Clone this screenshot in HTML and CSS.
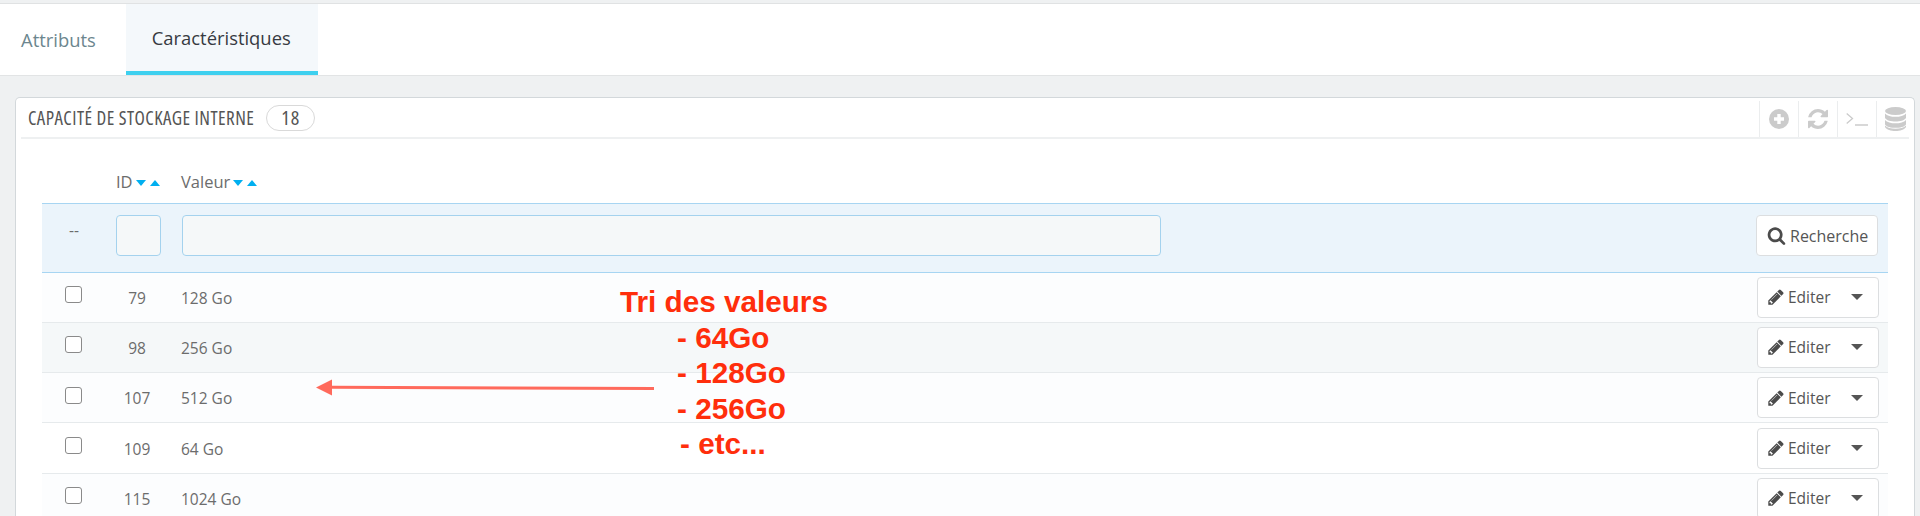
FILE: index.html
```html
<!DOCTYPE html>
<html lang="fr">
<head>
<meta charset="utf-8">
<title>Caractéristiques</title>
<link rel="stylesheet" href="styles.css">
</head>
<body>
<nav class="tabs">
  <a class="tab tab-first">Attributs</a>
  <a class="tab tab-active">Caractéristiques</a>
</nav>
<main class="content">
  <section class="panel">
    <header class="panel-head">
      <h2 class="panel-title">Capacité de stockage interne</h2>
      <span class="badge">18</span>
      <div class="tools">
        <span class="tool"><svg class="ico-tool" viewBox="0 0 20 20"><circle cx="10" cy="10" r="10" fill="#cbcbcb"/><path d="M10 5v10M5 10h10" stroke="#fff" stroke-width="3.4" fill="none"/></svg></span>
        <span class="tool"><svg class="ico-tool" viewBox="128 128 1536 1536"><path fill="#cbcbcb" d="M1639 1056q0 5-1 7-64 268-268 434.5t-478 166.5q-146 0-282.5-55t-243.5-157l-129 129q-19 19-45 19t-45-19-19-45v-448q0-26 19-45t45-19h448q26 0 45 19t19 45-19 45l-137 137q71 66 161 102t187 36q134 0 250-65t186-179q11-17 53-117 8-23 30-23h192q13 0 22.5 9.5t9.5 22.5zm25-800v448q0 26-19 45t-45 19h-448q-26 0-45-19t-19-45 19-45l138-138q-148-137-349-137-134 0-250 65t-186 179q-11 17-53 117-8 23-30 23h-199q-13 0-22.5-9.5t-9.5-22.5v-7q65-268 270-434.5t480-166.5q146 0 284 55.5t245 156.5l130-129q19-19 45-19t45 19 19 45z"/></svg></span>
        <span class="tool"><svg class="ico-term" viewBox="0 0 22 14"><path d="M.7 1.5 6.5 6.5.7 11.5M9 13h13" stroke="#cbcbcb" stroke-width="1.3" fill="none"/></svg></span>
        <span class="tool"><svg class="ico-db" viewBox="0 0 21 24"><ellipse cx="10.5" cy="4" rx="10.5" ry="4" fill="#cbcbcb"/><path fill="#cbcbcb" d="M0 6.5c2 2.6 6 3.3 10.500 3.300S19 9.100 21 6.500V11c-1.500 2.500-6 3.500-10.500 3.500S1.500 13.500 0 11zM0 13c2 2.600 6 3.300 10.500 3.300S19 15.600 21 13v4.500c-1.500 2.500-6 3.300-10.500 3.300S1.500 20 0 17.500zM0 18.500c2 2.600 6 3.200 10.500 3.200S19 21.100 21 18.500V20c-1.500 2.800-6 4-10.500 4S1.500 22.800 0 20z"/></svg></span>
      </div>
    </header>
    <table class="grid">
      <colgroup>
        <col class="col-check"><col class="col-id"><col class="col-value"><col class="col-actions">
      </colgroup>
      <thead>
        <tr class="sort-row">
          <th></th>
          <th class="th-id">ID<i class="down"></i><i class="up"></i></th>
          <th>Valeur<i class="down"></i><i class="up"></i></th>
          <th></th>
        </tr>
        <tr class="filter-row">
          <th class="dashes">--</th>
          <th class="filter-cell"><input class="filter filter-id" type="text"></th>
          <th class="filter-cell"><input class="filter filter-value" type="text"></th>
          <th class="filter-cell">
            <button class="btn btn-search"><svg class="ico" viewBox="0 0 1792 1792"><path fill="#4b4b4b" d="M1216 832q0-185-131.500-316.500t-316.500-131.500-316.500 131.500-131.500 316.500 131.500 316.500 316.500 131.500 316.500-131.500 131.500-316.500zm512 832q0 52-38 90t-90 38q-54 0-90-38l-343-342q-179 124-399 124-143 0-273.500-55.500t-225-150-150-225-55.500-273.500 55.500-273.500 150-225 225-150 273.500-55.500 273.500 55.500 225 150 150 225 55.500 273.500q0 220-124 399l343 343q37 37 37 90z"/></svg>Recherche</button>
          </th>
        </tr>
      </thead>
      <tbody>
        <tr class="row row-odd"><td class="cell-check"><input class="check" type="checkbox"></td><td class="cell-id">79</td><td class="cell-value">128 Go</td><td class="cell-action"><button class="btn btn-edit"><svg class="ico" viewBox="0 0 1792 1792"><path fill="#4b4b4b" d="M491 1536l91-91-235-235-91 91v107h128v128h107zm523-928q0-22-22-22-10 0-17 7l-542 542q-7 7-7 17 0 22 22 22 10 0 17-7l542-542q7-7 7-17zm-54-192l416 416-832 832h-416v-416zm683 96q0 53-37 90l-166 166-416-416 166-165q36-38 90-38 53 0 91 38l235 234q37 39 37 91z"/></svg><span class="btn-label">Editer</span><i class="caret"></i></button></td></tr>
        <tr class="row row-hover"><td class="cell-check"><input class="check" type="checkbox"></td><td class="cell-id">98</td><td class="cell-value">256 Go</td><td class="cell-action"><button class="btn btn-edit"><svg class="ico" viewBox="0 0 1792 1792"><path fill="#4b4b4b" d="M491 1536l91-91-235-235-91 91v107h128v128h107zm523-928q0-22-22-22-10 0-17 7l-542 542q-7 7-7 17 0 22 22 22 10 0 17-7l542-542q7-7 7-17zm-54-192l416 416-832 832h-416v-416zm683 96q0 53-37 90l-166 166-416-416 166-165q36-38 90-38 53 0 91 38l235 234q37 39 37 91z"/></svg><span class="btn-label">Editer</span><i class="caret"></i></button></td></tr>
        <tr class="row row-odd"><td class="cell-check"><input class="check" type="checkbox"></td><td class="cell-id">107</td><td class="cell-value">512 Go</td><td class="cell-action"><button class="btn btn-edit"><svg class="ico" viewBox="0 0 1792 1792"><path fill="#4b4b4b" d="M491 1536l91-91-235-235-91 91v107h128v128h107zm523-928q0-22-22-22-10 0-17 7l-542 542q-7 7-7 17 0 22 22 22 10 0 17-7l542-542q7-7 7-17zm-54-192l416 416-832 832h-416v-416zm683 96q0 53-37 90l-166 166-416-416 166-165q36-38 90-38 53 0 91 38l235 234q37 39 37 91z"/></svg><span class="btn-label">Editer</span><i class="caret"></i></button></td></tr>
        <tr class="row"><td class="cell-check"><input class="check" type="checkbox"></td><td class="cell-id">109</td><td class="cell-value">64 Go</td><td class="cell-action"><button class="btn btn-edit"><svg class="ico" viewBox="0 0 1792 1792"><path fill="#4b4b4b" d="M491 1536l91-91-235-235-91 91v107h128v128h107zm523-928q0-22-22-22-10 0-17 7l-542 542q-7 7-7 17 0 22 22 22 10 0 17-7l542-542q7-7 7-17zm-54-192l416 416-832 832h-416v-416zm683 96q0 53-37 90l-166 166-416-416 166-165q36-38 90-38 53 0 91 38l235 234q37 39 37 91z"/></svg><span class="btn-label">Editer</span><i class="caret"></i></button></td></tr>
        <tr class="row row-odd"><td class="cell-check"><input class="check" type="checkbox"></td><td class="cell-id">115</td><td class="cell-value">1024 Go</td><td class="cell-action"><button class="btn btn-edit"><svg class="ico" viewBox="0 0 1792 1792"><path fill="#4b4b4b" d="M491 1536l91-91-235-235-91 91v107h128v128h107zm523-928q0-22-22-22-10 0-17 7l-542 542q-7 7-7 17 0 22 22 22 10 0 17-7l542-542q7-7 7-17zm-54-192l416 416-832 832h-416v-416zm683 96q0 53-37 90l-166 166-416-416 166-165q36-38 90-38 53 0 91 38l235 234q37 39 37 91z"/></svg><span class="btn-label">Editer</span><i class="caret"></i></button></td></tr>
      </tbody>
    </table>
  </section>
</main>
<div class="note">
  <div class="note-line">Tri des valeurs</div>
  <div class="note-line note-item">- 64Go</div>
  <div class="note-line note-item">- 128Go</div>
  <div class="note-line note-item">- 256Go</div>
  <div class="note-line note-last">- etc...</div>
</div>
<svg class="arrow" viewBox="0 0 338 18"><path d="M16 8.300 338 9.500" stroke="#ff6a5c" stroke-width="3" fill="none"/><path d="M0 8.500 16 .5V16.500z" fill="#ff6a5c"/></svg>
</body>
</html>
```
FILE: styles.css
```css
* { box-sizing: border-box; }
html, body { margin: 0; height: 516px; overflow: hidden; }
body {
  background: #eff1f2;
  font-family: "Open Sans", sans-serif;
  color: #6c6c6c;
  position: relative;
  padding-top: 3px;
}
.tabs {
  display: flex;
  height: 73px;
  background: #fff;
  border-top: 1px solid #e0e2e3;
  border-bottom: 1px solid #e2e4e5;
}
.tab {
  display: flex;
  align-items: center;
  padding: 0 27px 0 26px;
  height: 71px;
  font-size: 18.400px;
  color: #363a41;
}
.tab-first { padding: 0 30px 0 21px; color: #6c868e; }
.tab-active {
  background: #f4f8fb;
  border-bottom: 4px solid #3ed0ef;
}
.content { padding: 21px 5px 0 15px; }
.panel {
  background: #fff;
  border: 1px solid #d3d8db;
  border-bottom: 0;
  border-radius: 5px 5px 0 0;
  padding: 0 5px;
  height: 419px;
  overflow: hidden;
}
.panel-head {
  display: flex;
  align-items: center;
  height: 41px;
  border-bottom: 2px solid #eef0f1;
  padding-left: 7px;
}
.panel-title {
  margin: 0;
  font-family: "Open Sans", sans-serif;
  font-stretch: 75%;
  font-weight: 500;
  font-size: 19px;
  letter-spacing: .45px;
  text-transform: uppercase;
  color: #555;
}
.badge {
  margin-left: 12px;
  width: 49px;
  height: 26px;
  border: 1px solid #d9d9d9;
  border-radius: 13px;
  display: flex;
  align-items: center;
  justify-content: center;
  font-stretch: 75%;
  font-weight: 500;
  font-size: 20px;
  letter-spacing: 1px;
  color: #555;
}
.tools { display: flex; margin-left: auto; align-self: stretch; padding-top: 3px; }
.tool {
  width: 39px;
  display: flex;
  align-items: center;
  justify-content: center;
  border-left: 1px solid #ebedee;
}
.tool:last-child { width: 33px; justify-content: flex-end; padding-right: 3px; }
.ico-tool { width: 20px; height: 20px; }
.ico-term { width: 22px; height: 14px; }
.ico-db { width: 21px; height: 24px; }
.grid {
  width: 1846px;
  margin-left: 21px;
  border-collapse: collapse;
  table-layout: fixed;
  font-size: 15.500px;
}
.col-check { width: 65px; }
.col-id { width: 74px; }
.col-value { width: auto; }
.col-actions { width: 134px; }
.grid th { font-weight: 400; text-align: left; padding: 0; }
.sort-row { height: 64px; }
.sort-row th { vertical-align: middle; padding-top: 21px; font-size: 16.500px; color: #6c6c6c; }
.th-id { padding-left: 9px !important; }
.down, .up { display: inline-block; width: 0; height: 0; border-left: 5.500px solid transparent; border-right: 5.500px solid transparent; vertical-align: 2px; }
.down { border-top: 6px solid #00aff0; margin-left: 3px; }
.up { border-bottom: 6px solid #00aff0; margin-left: 4px; }
.filter-row { height: 69px; background: #ebf4fb; border-top: 1px solid #a7d5f2; border-bottom: 1px solid #a7d5f2; }
.filter-cell { padding-bottom: 4px !important; }
.dashes { padding-left: 27px !important; padding-bottom: 15px !important; }
.filter {
  display: block;
  height: 41px;
  background: #f5f8f9;
  border: 1px solid #a4d2ee;
  border-radius: 4px;
  padding: 0;
}
.filter-id { width: 45px; margin-left: 9px; }
.filter-value { width: 979px; margin-left: 1px; }
.cell-action { text-align: left; padding: 0 0 0 1px; }
.btn {
  display: flex;
  align-items: center;
  width: 122px;
  height: 41px;
  background: #fff;
  border: 1px solid #dcdee0;
  border-radius: 4px;
  font: 16px "Open Sans", sans-serif;
  color: #555;
  padding: 0 0 0 9px;
}
.btn-search { margin-left: 2px; padding-left: 10px; }
.btn-search .ico { width: 19px; height: 19px; margin-right: 4px; }
.btn-edit { margin-left: 2px; font-size: 15.500px; }
.ico { width: 18px; height: 18px; margin-right: 3px; flex: none; }
.btn-label { flex: 1; text-align: left; }
.caret {
  width: 0; height: 0;
  border-left: 6px solid transparent;
  border-right: 6px solid transparent;
  border-top: 6px solid #555;
  margin-right: 15px;
}
.row { height: 50.300px; border-bottom: 1px solid #e6eaec; background: #fff; color: #6c6c6c; }
.row-odd { background: #fcfdfe; }
.row-hover { background: #f5f8f9; }
.cell-check { padding: 0 0 0 23px; }
.cell-id { text-align: center; padding: 1px 14px 0 0; }
.cell-value { padding: 1px 0 0; }
.check {
  appearance: none;
  display: block;
  width: 17px;
  height: 17px;
  margin: 0 0 5px 0;
  background: #fff;
  border: 1px solid #8a8a8a;
  border-radius: 3px;
}
.note {
  position: absolute;
  left: 620px;
  top: 284px;
  font-family: "Liberation Sans", Arial, sans-serif;
  font-weight: 700;
  font-size: 29.700px;
  line-height: 35.600px;
  color: #ff2e0c;
}
.note-item { margin-left: 57px; }
.note-last { margin-left: 60px; }
.arrow { position: absolute; left: 316px; top: 379px; width: 338px; height: 18px; }
```
